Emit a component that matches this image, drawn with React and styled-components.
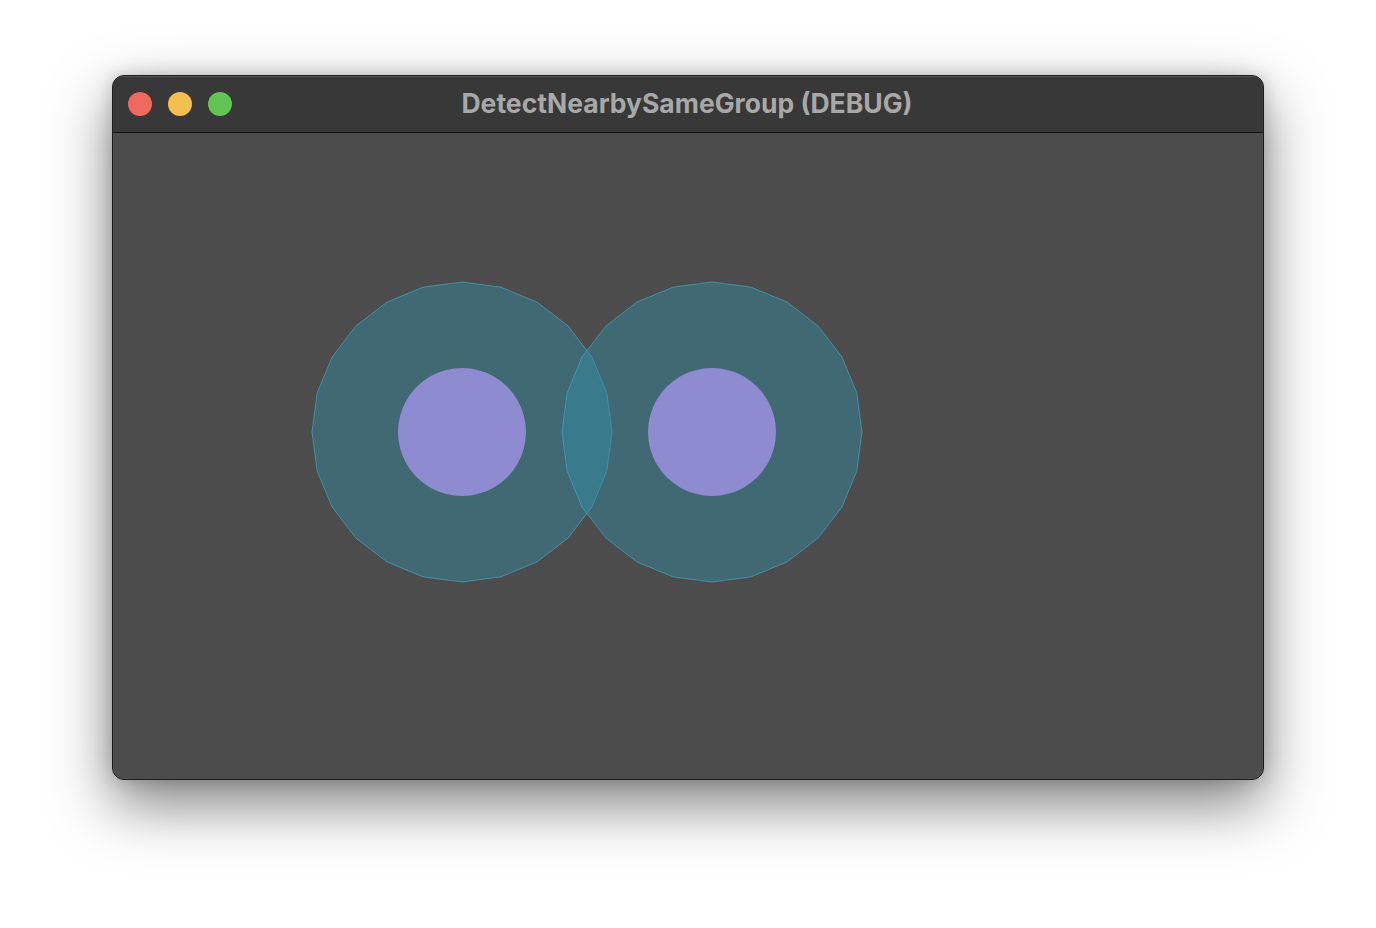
import React from 'react';
import styled, { createGlobalStyle } from 'styled-components';

const GlobalStyle = createGlobalStyle`
  html, body {
    margin: 0;
    padding: 0;
    background: #ffffff;
  }
  body {
    font-family: Inter, "Liberation Sans", sans-serif;
  }
`;

const Page = styled.div`
  width: 1376px;
  height: 928px;
  display: flex;
  justify-content: center;
  align-items: flex-start;
  padding-top: 75px;
  box-sizing: border-box;
  background: #ffffff;
`;

const Window = styled.div`
  width: 1152px;
  height: 705px;
  display: flex;
  flex-direction: column;
  border-radius: 12px;
  border: 1px solid #1e1e1e;
  box-sizing: border-box;
  overflow: hidden;
  background: #4c4c4c;
  box-shadow: inset 0 0 0 1px #6a6a6a, 0 24px 60px rgba(0, 0, 0, 0.5),
    0 0 18px rgba(0, 0, 0, 0.18);
`;

const TitleBar = styled.div`
  position: relative;
  height: 56px;
  flex-shrink: 0;
  display: flex;
  align-items: center;
  justify-content: center;
  background: #383838;
  border-bottom: 1px solid #111111;
  box-shadow: inset 0 1px 0 #555555;
`;

const Lights = styled.div`
  position: absolute;
  left: 15px;
  top: 0;
  bottom: 0;
  display: flex;
  align-items: center;
  gap: 16px;
`;

const Light = styled.span`
  width: 24px;
  height: 24px;
  border-radius: 50%;
  background: ${(p) => p.$color};
`;

const Title = styled.div`
  font-family: Inter, "Liberation Sans", sans-serif;
  font-weight: 700;
  font-size: 26.5px;
  color: #a8a8a8;
  margin-left: -2px;
  margin-top: -2px;
`;

const Canvas = styled.div`
  flex: 1;
  background: #4c4c4c;
`;

const Scene = styled.svg`
  display: block;
  width: 100%;
  height: 100%;
`;

function polygon(cx, cy, r, n) {
  const pts = [];
  for (let i = 0; i < n; i += 1) {
    const a = (i / n) * Math.PI * 2;
    pts.push(`${(cx + r * Math.cos(a)).toFixed(2)},${(cy + r * Math.sin(a)).toFixed(2)}`);
  }
  return pts.join(' ');
}

// scene coordinates are relative to the canvas top-left corner
const bodies = [
  { x: 349, y: 299 },
  { x: 599, y: 299 },
];

export default function App() {
  return (
    <>
      <GlobalStyle />
      <Page>
        <Window>
          <TitleBar>
            <Lights>
              <Light $color="#ee6a5e" />
              <Light $color="#f5bf4f" />
              <Light $color="#61c554" />
            </Lights>
            <Title>DetectNearbySameGroup (DEBUG)</Title>
          </TitleBar>
          <Canvas>
            <Scene viewBox="0 0 1150 646" preserveAspectRatio="xMinYMin meet">
              {bodies.map((b) => (
                <polygon
                  key={`area-${b.x}`}
                  points={polygon(b.x, b.y, 150, 24)}
                  fill="rgb(48,146,172)"
                  fillOpacity="0.42"
                  stroke="rgba(72,172,204,0.7)"
                  strokeWidth="0.9"
                />
              ))}
              {bodies.map((b) => (
                <polygon
                  key={`body-${b.x}`}
                  points={polygon(b.x, b.y, 64, 48)}
                  fill="#8f8bd0"
                />
              ))}
            </Scene>
          </Canvas>
        </Window>
      </Page>
    </>
  );
}
